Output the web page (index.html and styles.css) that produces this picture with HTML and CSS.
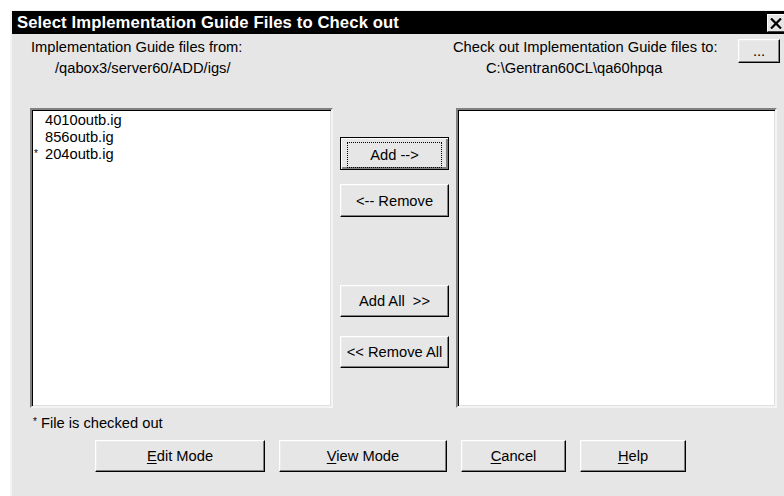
FILE: index.html
```html
<!DOCTYPE html>
<html>
<head>
    <title>Select Implementation Guide Files to Check out</title>
    <link rel="stylesheet" href="styles.css">
</head>
<body>
    <div class="window">
        <div class="titlebar">
            <span class="title">Select Implementation Guide Files to Check out</span>
            <span class="close">
                <svg width="12" height="11" viewBox="0 0 12 11">
                    <path d="M1 0.5 L11 10.5 M11 0.5 L1 10.5" stroke="#000" stroke-width="2.2" fill="none"/>
                </svg>
            </span>
        </div>
        <div class="content">
            <div class="header">
                <div class="source">
                    <div class="label">Implementation Guide files from:</div>
                    <div class="path path-src">/qabox3/server60/ADD/igs/</div>
                </div>
                <div class="dest">
                    <div class="dest-row">
                        <div class="label">Check out Implementation Guide files to:</div>
                        <button class="btn btn-browse">...</button>
                    </div>
                    <div class="path path-dest">C:\Gentran60CL\qa60hpqa</div>
                </div>
            </div>
            <div class="lists">
                <div class="listbox">
                    <div class="item"><span class="mark"></span>4010outb.ig</div>
                    <div class="item"><span class="mark"></span>856outb.ig</div>
                    <div class="item"><span class="mark">*</span>204outb.ig</div>
                </div>
                <div class="actions">
                    <button class="btn btn-default btn-add"><span class="focus">Add --&gt;</span></button>
                    <button class="btn btn-remove">&lt;-- Remove</button>
                    <button class="btn btn-addall">Add All &nbsp;&gt;&gt;</button>
                    <button class="btn btn-removeall">&lt;&lt; Remove All</button>
                </div>
                <div class="listbox"></div>
            </div>
            <div class="note"><span class="mark">*</span> File is checked out</div>
            <div class="footer">
                <button class="btn btn-wide"><u>E</u>dit Mode</button>
                <button class="btn btn-wide btn-view"><u>V</u>iew Mode</button>
                <button class="btn btn-small"><u>C</u>ancel</button>
                <button class="btn btn-small"><u>H</u>elp</button>
            </div>
        </div>
    </div>
</body>
</html>
```

FILE: styles.css
```css
body {
    margin: 0;
    padding: 0;
    background-color: #fff;
    font-family: "Liberation Sans", Arial, sans-serif;
    font-size: 14.7px;
    color: #000;
    overflow: hidden;
}

.window {
    margin: 10px 0 0 10px;
    height: 486px;
    border-top: 1px solid #f2f2f2;
    border-left: 2px solid #f4f4f4;
    background-color: #e6e6e6;
    box-sizing: border-box;
}

.titlebar {
    height: 23px;
    background-color: #000;
    color: #fff;
    display: flex;
    align-items: center;
    justify-content: space-between;
}

.title {
    padding-left: 5px;
    font-weight: bold;
    font-size: 16.7px;
    letter-spacing: 0.1px;
}

.close {
    width: 17px;
    height: 18px;
    margin-top: 1px;
    box-sizing: border-box;
    background-color: #e6e6e6;
    border-top: 1px solid #fff;
    border-left: 1px solid #fff;
    border-bottom: 1px solid #404040;
    display: flex;
    align-items: center;
    justify-content: center;
}

.content {
    padding-left: 18px;
}

.header {
    display: flex;
    padding-top: 3px;
    height: 71px;
}

.label,
.path {
    line-height: 21px;
    white-space: nowrap;
}

.source {
    width: 422px;
    padding-left: 1px;
}

.path-src {
    padding-left: 24px;
}

.dest-row {
    display: flex;
    height: 21px;
}

.dest-row .label {
    width: 285px;
}

.path-dest {
    padding-left: 33px;
}

.lists {
    display: flex;
    gap: 7px;
    height: 300px;
}

.listbox {
    width: 303px;
    box-sizing: border-box;
    background-color: #fff;
    border: 2px solid;
    border-color: #808080 #f4f4f4 #f4f4f4 #808080;
    box-shadow: inset 1px 1px 0 #000, inset -1px -1px 0 #e0e0e0;
    padding: 2px 0 0 2px;
}

.listbox:last-child {
    width: 321px;
}

.item {
    line-height: 17px;
    white-space: nowrap;
}

.mark {
    display: inline-block;
    width: 11px;
    font-size: 10px;
    vertical-align: top;
    line-height: 15px;
}

.actions {
    width: 109px;
    display: flex;
    flex-direction: column;
}

.btn {
    font-family: "Liberation Sans", Arial, sans-serif;
    font-size: 14.7px;
    color: #000;
    background-color: #e6e6e6;
    border: 1px solid;
    border-color: #fff #000 #000 #fff;
    box-shadow: inset -1px -1px 0 #808080, inset 1px 1px 0 #ececec;
    padding: 0;
    margin: 0;
    height: 33px;
    width: 109px;
    white-space: nowrap;
}

.btn u {
    text-decoration-thickness: 1px;
    text-underline-offset: 2px;
}

.btn-default {
    border: 1px solid #000;
    box-shadow: inset 1px 1px 0 #fff, inset -2px -2px 0 #808080;
}

.focus {
    display: block;
    margin: 4px 6px;
    padding: 4px 0;
    border: 1px dotted #000;
}

.btn-add {
    margin-top: 29px;
}

.btn-remove {
    margin-top: 14px;
}

.btn-addall {
    margin-top: 68px;
    height: 32px;
}

.btn-removeall {
    margin-top: 19px;
    height: 32px;
}

.btn-browse {
    width: 42px;
    height: 24px;
    margin-top: 2px;
    line-height: 18px;
}

.note {
    padding: 6px 0 0 3px;
    height: 26px;
    box-sizing: border-box;
    line-height: 18px;
}

.note .mark {
    width: auto;
}

.footer {
    display: flex;
    gap: 14px;
    padding-left: 65px;
    margin-top: 6px;
}

.btn-wide {
    width: 170px;
    height: 32px;
}

.btn-view {
    width: 168px;
}

.btn-small {
    width: 105px;
    height: 32px;
}

.btn-small:last-child {
    width: 106px;
}
```
